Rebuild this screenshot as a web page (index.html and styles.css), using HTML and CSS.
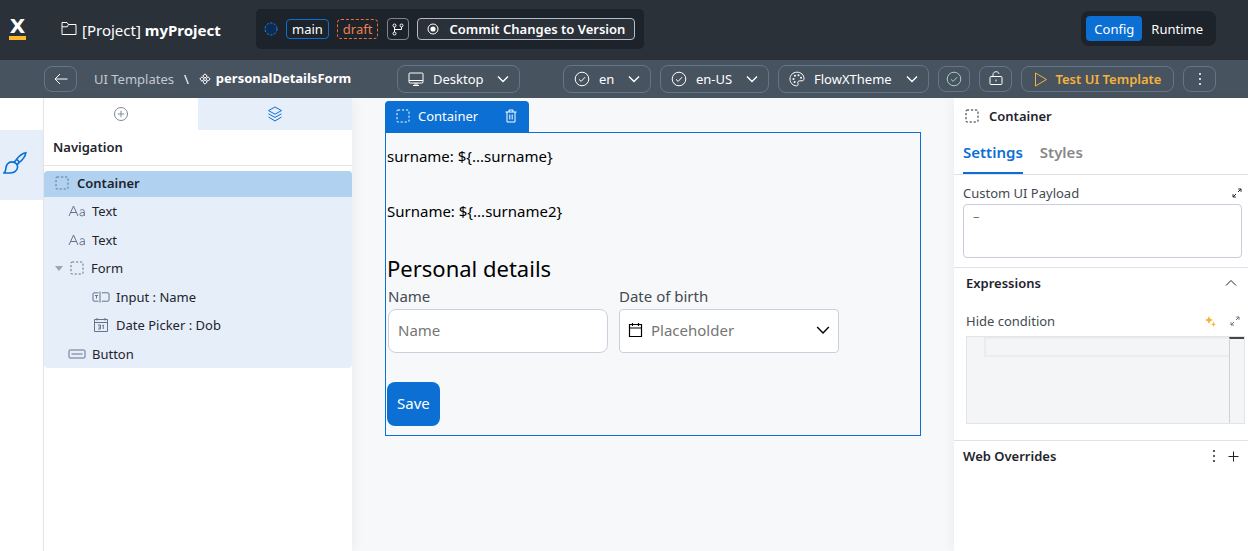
FILE: index.html
```html
<!DOCTYPE html>
<html lang="en">

<head>
    <meta charset="UTF-8">
    <meta name="viewport" content="width=device-width, initial-scale=1.0">
    <title>personalDetailsForm</title>
    <link rel="stylesheet" href="styles.css">
</head>

<body>
    <!-- shared icons -->
    <svg class="sprite" aria-hidden="true">
        <symbol id="i-dashed" viewBox="0 0 14 14">
            <rect x="1" y="1" width="12" height="12" rx="1" stroke-dasharray="2.2 1.8" />
        </symbol>
        <symbol id="i-chevron" viewBox="0 0 12 12">
            <path d="M1 3.5 6 8.5 11 3.5" />
        </symbol>
        <symbol id="i-check" viewBox="0 0 16 16">
            <circle cx="8" cy="8" r="6.8" />
            <path d="M5 8.4 7.2 10.4 11 6.2" />
        </symbol>
        <symbol id="i-expand" viewBox="0 0 10 10">
            <path d="M6 4 9 1M6.2 1H9V3.8M4 6 1 9M1 6.2V9H3.8" />
        </symbol>
        <symbol id="i-more" viewBox="0 0 4 14">
            <circle cx="2" cy="2" r="1" />
            <circle cx="2" cy="7" r="1" />
            <circle cx="2" cy="12" r="1" />
        </symbol>
        <symbol id="i-letters" viewBox="0 0 18 12">
            <path d="M1 11 5.5 1 10 11M2.8 7.5H8.2M12.2 5.4C13.5 4.2 16.3 4.2 16.3 6.5V11M16.3 7.5C13 7.4 11.8 8.2 11.8 9.3 11.8 11.4 15.5 11.4 16.3 9.2" />
        </symbol>
    </svg>

    <header class="topbar">
        <a class="logo" href="#" aria-label="Home">X</a>
        <div class="project">
            <svg class="icon" width="16" height="16" viewBox="0 0 16 16">
                <path d="M1 12.5V.5H6L7.5 2.5H15V12.5ZM1 4.8H6.3L7.5 2.5" />
            </svg>
            <span>[Project] <strong>myProject</strong></span>
        </div>
        <div class="version">
            <svg class="icon state" width="14" height="14" viewBox="0 0 14 14">
                <circle cx="7" cy="7" r="6" stroke-dasharray="2.4 1.4" />
            </svg>
            <span class="tag tag-main">main</span>
            <span class="tag tag-draft">draft</span>
            <button type="button" class="branch" aria-label="Branches">
                <svg class="icon" width="12" height="13" viewBox="0 0 12 13">
                    <circle cx="2.5" cy="2.5" r="1.5" />
                    <circle cx="2.5" cy="10.5" r="1.5" />
                    <circle cx="9.5" cy="2.5" r="1.5" />
                    <path d="M2.5 4V9M9.5 4V6.5H2.5" />
                </svg>
            </button>
            <button type="button" class="commit">
                <svg class="icon" width="12" height="12" viewBox="0 0 12 12">
                    <circle cx="6" cy="6" r="5" />
                    <circle class="solid" cx="6" cy="6" r="2.6" />
                </svg>
                Commit Changes to Version
            </button>
        </div>
        <div class="mode">
            <button type="button" class="active">Config</button>
            <button type="button">Runtime</button>
        </div>
    </header>

    <div class="toolbar">
        <button type="button" class="pill back" aria-label="Back">
            <svg class="icon" width="14" height="12" viewBox="0 0 14 12">
                <path d="M13.5 6H1M6 1 1 6 6 11" />
            </svg>
        </button>
        <nav class="crumbs">
            <a href="#">UI Templates</a>
            <span class="slash">\</span>
            <svg class="icon" width="12" height="12" viewBox="0 0 12 12">
                <path d="M6 .8 8.2 3 6 5.2 3.8 3ZM3 3.8 5.2 6 3 8.2.8 6ZM9 3.8 11.2 6 9 8.2 6.8 6ZM6 6.8 8.2 9 6 11.2 3.8 9Z" />
            </svg>
            <strong>personalDetailsForm</strong>
        </nav>
        <label class="picker picker-device">
            <svg class="icon" width="16" height="16" viewBox="0 0 16 16">
                <rect x="1" y="2" width="14" height="10" rx="1" />
                <path d="M1 9.5H15M7 12V14M9 12V14M5 14.5H11" />
            </svg>
            <select aria-label="Device">
                <option>Desktop</option>
            </select>
            <svg class="icon chevron" width="12" height="12"><use href="#i-chevron" /></svg>
        </label>
        <label class="picker picker-lang">
            <svg class="icon" width="16" height="16"><use href="#i-check" /></svg>
            <select aria-label="Language">
                <option>en</option>
            </select>
            <svg class="icon chevron" width="12" height="12"><use href="#i-chevron" /></svg>
        </label>
        <label class="picker picker-locale">
            <svg class="icon" width="16" height="16"><use href="#i-check" /></svg>
            <select aria-label="Locale">
                <option>en-US</option>
            </select>
            <svg class="icon chevron" width="12" height="12"><use href="#i-chevron" /></svg>
        </label>
        <label class="picker picker-theme">
            <svg class="icon" width="16" height="16" viewBox="0 0 16 16">
                <path d="M8 1.2C3.6 1.2 1 4.4 1 8 1 11.8 4 14.8 7.4 14.8 9 14.8 9.4 13.8 9 12.6 8.4 10.9 9.3 9.8 10.8 9.8H13C14.4 9.8 15 9 15 7.6 15 4 12 1.2 8 1.2Z" />
                <g class="solid">
                    <circle cx="4.5" cy="8" r="1" />
                    <circle cx="6" cy="4.8" r="1" />
                    <circle cx="9.5" cy="4.3" r="1" />
                    <circle cx="12" cy="6.8" r="1" />
                    <circle cx="5.6" cy="11" r="1" />
                </g>
            </svg>
            <select aria-label="Theme">
                <option>FlowXTheme</option>
            </select>
            <svg class="icon chevron" width="12" height="12"><use href="#i-chevron" /></svg>
        </label>
        <button type="button" class="pill valid" aria-label="Validate">
            <svg class="icon" width="16" height="16"><use href="#i-check" /></svg>
        </button>
        <button type="button" class="pill" aria-label="Lock">
            <svg class="icon" width="14" height="16" viewBox="0 0 14 16">
                <rect x="1" y="5.5" width="12" height="8" rx="1" />
                <path d="M4 5.5V3.6C4 0 9.5-.2 10 2.8M7 8.6V10.4" />
            </svg>
        </button>
        <button type="button" class="pill test">
            <svg class="icon" width="14" height="15" viewBox="0 0 14 15">
                <path d="M1.5 1V14L12.5 7.5Z" />
            </svg>
            Test UI Template
        </button>
        <button type="button" class="pill" aria-label="More">
            <svg class="icon dots" width="4" height="14"><use href="#i-more" /></svg>
        </button>
    </div>

    <div class="workspace">
        <aside class="rail">
            <button type="button" aria-label="Design">
                <svg class="icon" width="24" height="24" viewBox="0 0 24 24">
                    <path d="M1 22C4 20 1.6 16.5 4.4 13 7 10 11 10.4 13.2 12.6 15.6 15.4 14.6 18.6 12 20.6 9.6 22.4 4 22 1 22Z" />
                    <path d="M11.2 11.2 13.4 8.6C15.8 5.4 19 2.6 22.8 1.8 22.2 5.6 19.4 9 16 11.6L14.2 13.6" />
                    <path d="M13.4 8.6C14.8 9 15.7 10 16 11.6" />
                </svg>
            </button>
        </aside>

        <aside class="navigator">
            <div class="nav-tabs">
                <button type="button" aria-label="Add">
                    <svg class="icon" width="16" height="16" viewBox="0 0 16 16">
                        <circle cx="8" cy="8" r="6.5" />
                        <path d="M8 4.8V11.2M4.8 8H11.2" />
                    </svg>
                </button>
                <button type="button" class="active" aria-label="Layers">
                    <svg class="icon" width="16" height="16" viewBox="0 0 16 16">
                        <path d="M8 1 14.5 4.6 8 8.2 1.5 4.6ZM1.5 7.8 8 11.4 14.5 7.8M1.5 11 8 15 14.5 11" />
                    </svg>
                </button>
            </div>
            <h2>Navigation</h2>
            <div class="tree">
                <div class="node selected">
                    <svg class="icon" width="14" height="14"><use href="#i-dashed" /></svg>
                    Container
                </div>
                <ul>
                    <li class="node level-1">
                        <svg class="icon" width="18" height="12"><use href="#i-letters" /></svg>
                        Text
                    </li>
                    <li class="node level-1">
                        <svg class="icon" width="18" height="12"><use href="#i-letters" /></svg>
                        Text
                    </li>
                    <li class="node level-form">
                        <svg class="caret" width="8" height="5" viewBox="0 0 8 5"><path d="M0 0H8L4 5Z" /></svg>
                        <svg class="icon" width="14" height="14"><use href="#i-dashed" /></svg>
                        Form
                    </li>
                    <li class="node level-2">
                        <svg class="icon" width="18" height="12" viewBox="0 0 18 12">
                            <path d="M6.5 1.8H2C1.3 1.8 1 2.2 1 2.8V9.2C1 9.8 1.3 10.2 2 10.2H6.5M9.8 1.8H16C16.7 1.8 17 2.2 17 2.8V9.2C17 9.8 16.7 10.2 16 10.2H9.8M8 .5V11.5M3 4.5H6M4.5 4.5V7.5" />
                        </svg>
                        Input : Name
                    </li>
                    <li class="node level-2">
                        <svg class="icon" width="18" height="16" viewBox="0 0 18 16">
                            <path d="M2.5 2.5H15.5V14.5H2.5ZM2.5 5.5H15.5M5 1V3.5M13 1V3.5M6 8H8.5V12H6M6.5 10H8.5M10.2 8.5 11.3 8V12" />
                        </svg>
                        Date Picker : Dob
                    </li>
                    <li class="node level-1">
                        <svg class="icon" width="18" height="12" viewBox="0 0 18 12">
                            <rect x="1" y="2" width="16" height="8" rx="1" />
                            <path d="M3.5 6H14.5" />
                        </svg>
                        Button
                    </li>
                </ul>
            </div>
        </aside>

        <main class="canvas">
            <div class="selection-tab">
                <svg class="icon" width="14" height="14"><use href="#i-dashed" /></svg>
                <span>Container</span>
                <button type="button" aria-label="Delete">
                    <svg class="icon" width="12" height="14" viewBox="0 0 12 14">
                        <path d="M.5 3H11.5M4 3V1H8V3M2 3V13H10V3M4.8 5.5V10.5M7.2 5.5V10.5" />
                    </svg>
                </button>
            </div>
            <form class="selection">
                <p>surname: ${...surname}</p>
                <p>Surname: ${...surname2}</p>
                <h1>Personal details</h1>
                <div class="fields">
                    <div class="field">
                        <label for="name">Name</label>
                        <input type="text" id="name" placeholder="Name">
                    </div>
                    <div class="field">
                        <label for="dob">Date of birth</label>
                        <div class="date-box">
                            <svg class="icon" width="15" height="16" viewBox="0 0 15 16">
                                <path d="M1.5 2.5H13.5V14.5H1.5ZM1.5 6H13.5M4.5 1V4M10.5 1V4" />
                            </svg>
                            <input type="text" id="dob" placeholder="Placeholder">
                            <svg class="icon chevron" width="14" height="14"><use href="#i-chevron" /></svg>
                        </div>
                    </div>
                </div>
                <button type="button" class="save">Save</button>
            </form>
        </main>

        <aside class="inspector">
            <div class="inspector-title">
                <svg class="icon" width="14" height="14"><use href="#i-dashed" /></svg>
                Container
            </div>
            <div class="inspector-tabs">
                <button type="button" class="active">Settings</button>
                <button type="button">Styles</button>
            </div>
            <section class="payload">
                <div class="row">
                    <label for="payload">Custom UI Payload</label>
                    <svg class="icon" width="10" height="10"><use href="#i-expand" /></svg>
                </div>
                <textarea id="payload" placeholder="–"></textarea>
            </section>
            <section class="expressions">
                <div class="row">
                    <h3>Expressions</h3>
                    <svg class="icon up" width="12" height="12"><use href="#i-chevron" /></svg>
                </div>
                <div class="row condition">
                    <label for="condition">Hide condition</label>
                    <svg class="spark" width="11" height="11" viewBox="0 0 11 11">
                        <path d="M4 0 5.2 2.8 8 4 5.2 5.2 4 8 2.8 5.2 0 4 2.8 2.8ZM8.5 5.5 9.2 7.5 11 8.2 9.2 8.9 8.5 11 7.8 8.9 6 8.2 7.8 7.5Z" />
                    </svg>
                    <svg class="icon" width="10" height="10"><use href="#i-expand" /></svg>
                </div>
                <div class="editor">
                    <textarea id="condition"></textarea>
                    <div class="ruler"></div>
                </div>
            </section>
            <section class="overrides row">
                <h3>Web Overrides</h3>
                <svg class="icon dots" width="4" height="14"><use href="#i-more" /></svg>
                <svg class="icon" width="11" height="11" viewBox="0 0 11 11">
                    <path d="M5.5.5V10.5M.5 5.5H10.5" />
                </svg>
            </section>
        </aside>
    </div>
</body>

</html>
```

FILE: styles.css
```css
* {
    box-sizing: border-box;
}

body {
    margin: 0;
    min-height: 100vh;
    display: flex;
    flex-direction: column;
    font-family: "Noto Sans", "Open Sans", sans-serif;
    font-size: 13px;
    line-height: 20px;
    color: #1e242c;
    background-color: #f7f8fa;
}

button,
input,
select,
textarea {
    font: inherit;
    color: inherit;
    margin: 0;
    padding: 0;
    border: none;
    background: none;
}

button {
    cursor: pointer;
    white-space: nowrap;
}

a {
    color: inherit;
    text-decoration: none;
}

h1,
h2,
h3,
p,
ul {
    margin: 0;
    padding: 0;
}

.sprite {
    position: absolute;
    width: 0;
    height: 0;
}

.icon {
    flex: none;
    fill: none;
    stroke: currentColor;
    stroke-width: 1;
}

.icon .solid,
.dots {
    fill: currentColor;
    stroke: none;
}

/* Top bar */
.topbar {
    display: flex;
    align-items: center;
    height: 60px;
    padding-right: 32px;
    padding-left: 9px;
    background-color: #2b3139;
    color: #fff;
}

.logo {
    width: 17px;
    height: 22px;
    margin-bottom: 2px;
    border-bottom: 4px solid #ffb92e;
    font: bold 20px/16px "DejaVu Sans", sans-serif;
    text-align: center;
}

.project {
    display: flex;
    align-items: center;
    gap: 5px;
    width: 195px;
    margin-left: 35px;
    font-size: 15px;
    white-space: nowrap;
}

.version {
    display: flex;
    align-items: center;
    height: 40px;
    margin-bottom: 2px;
    padding: 0 9px 0 8px;
    border-radius: 5px;
    background-color: #1d232a;
}

.state {
    fill: #0b2d55;
    stroke: #2680e0;
}

.tag {
    height: 20px;
    margin-left: 8px;
    padding: 0 5px;
    border: 1px solid #0d6fd4;
    border-radius: 4px;
    line-height: 18px;
}

.tag-draft {
    border: 1px dashed #ef6c3a;
    color: #ef8050;
}

.branch,
.commit {
    display: flex;
    align-items: center;
    justify-content: center;
    height: 22px;
    border: 1px solid #7d8794;
    border-radius: 4px;
}

.branch {
    width: 22px;
    margin-left: 9px;
}

.commit {
    gap: 10px;
    margin-left: 8px;
    padding: 0 9px;
    border-color: #b4bcc8;
    background-color: #2b3139;
    font-weight: 600;
}

.mode {
    display: flex;
    gap: 1px;
    height: 35px;
    margin-bottom: 3px;
    margin-left: auto;
    padding: 5px;
    border-radius: 8px;
    background-color: #1d232a;
}

.mode button {
    padding: 0 8px;
    border-radius: 4px;
}

.mode .active {
    background-color: #0b6fd3;
}

/* Toolbar */
.toolbar {
    display: flex;
    align-items: center;
    gap: 9px;
    height: 38px;
    padding-right: 32px;
    padding-left: 44px;
    background-color: #485360;
    color: #fff;
}

.pill {
    display: flex;
    align-items: center;
    justify-content: center;
    flex: none;
    width: 33px;
    height: 26px;
    border: 1px solid #64748b;
    border-radius: 8px;
}

.crumbs {
    display: flex;
    align-items: center;
    flex: none;
    margin-left: 8px;
    white-space: nowrap;
}

.crumbs a {
    color: #c3c9d1;
}

.slash {
    margin: 0 10px;
}

.crumbs strong {
    margin-left: 5px;
    padding-bottom: 2px;
}

.picker {
    display: flex;
    align-items: center;
    flex: none;
    gap: 9px;
    height: 28px;
    padding: 0 10px;
    border: 1px solid #64748b;
    border-radius: 8px;
}

.picker select {
    flex: 1;
    min-width: 0;
    appearance: none;
}

.picker .chevron {
    stroke-width: 1.4;
    pointer-events: none;
}

.picker-device {
    width: 123px;
    margin-left: auto;
}

.picker-lang {
    width: 88px;
    margin-left: 34px;
}

.picker-locale {
    width: 109px;
}

.picker-theme {
    width: 151px;
}

.valid {
    width: 32px;
    color: #a5d0c4;
}

.test {
    gap: 8px;
    width: 153px;
    color: #f5b23c;
    font-weight: 600;
}

/* Workspace */
.workspace {
    display: flex;
    flex: 1;
}

.rail {
    flex: none;
    width: 44px;
    padding-top: 32px;
    border-right: 1px solid #e3e5e9;
    background-color: #fff;
}

.rail button {
    display: flex;
    align-items: center;
    width: 100%;
    height: 70px;
    padding: 0 0 5px 3px;
    background-color: #e6eefa;
    color: #0b6fd3;
}

.rail .icon {
    stroke-width: 1.6;
}

/* Navigator */
.navigator {
    flex: none;
    width: 308px;
    background-color: #fff;
    box-shadow: 4px 0 10px rgba(0, 0, 0, 0.04);
}

.nav-tabs {
    display: grid;
    grid-template-columns: 1fr 1fr;
    height: 32px;
}

.nav-tabs button {
    display: flex;
    align-items: center;
    justify-content: center;
    color: #7d8998;
}

.nav-tabs .active {
    background-color: #e6eefa;
    color: #0b6fd3;
}

.navigator h2 {
    padding: 7px 9px 8px;
    border-bottom: 1px solid #e3e5e9;
    font-size: 13px;
    font-weight: 600;
}

.tree {
    margin-top: 5px;
    border-radius: 4px;
    overflow: hidden;
    background-color: #e6eefa;
}

.tree ul {
    display: grid;
    grid-auto-rows: 1fr;
    height: 171px;
    list-style: none;
}

.node {
    display: flex;
    align-items: center;
    gap: 6px;
}

.node .icon {
    color: #64748b;
}

.selected {
    gap: 8px;
    height: 26px;
    padding-bottom: 2px;
    padding-left: 11px;
    background-color: #b0d2f0;
    font-weight: 600;
}

.level-1 {
    padding-left: 24px;
}

.level-form {
    gap: 7px;
    padding-left: 11px;
}

.level-2 {
    padding-left: 48px;
}

.caret {
    fill: #9aa5b4;
}

/* Canvas */
.canvas {
    flex: 1;
    min-width: 0;
    padding: 3px 33px 0;
}

.selection-tab {
    display: flex;
    align-items: center;
    gap: 8px;
    width: 144px;
    height: 31px;
    padding: 0 12px 2px 11px;
    border-radius: 4px 4px 0 0;
    background-color: #0b6fd3;
    color: #fff;
}

.selection-tab button {
    display: flex;
    margin-left: auto;
}

.selection {
    padding: 11px 1px 9px;
    border: 1px solid #0b6fd3;
    color: #000;
    font-size: 15px;
    line-height: 24px;
}

.selection p {
    margin-bottom: 31px;
}

.selection h1 {
    padding-bottom: 2px;
    font-size: 22px;
    font-weight: 400;
    line-height: 28px;
}

.fields {
    display: flex;
    gap: 11px;
    padding-left: 1px;
}

.field {
    width: 220px;
}

.field label {
    display: block;
    margin-bottom: 1px;
    color: #434a52;
}

.field > input,
.date-box {
    width: 100%;
    height: 44px;
    padding: 0 9px 2px;
    border: 1px solid #cdd0dc;
    border-radius: 8px;
    background-color: #fff;
}

.date-box {
    display: flex;
    align-items: center;
    gap: 8px;
    padding: 0 8px 2px;
    border-radius: 4px;
}

.date-box input {
    flex: 1;
    min-width: 0;
}

.date-box .icon {
    stroke-width: 1.2;
}

.field input::placeholder {
    color: #757575;
}

.save {
    display: block;
    height: 44px;
    margin-top: 29px;
    padding: 0 10px 2px;
    border-radius: 8px;
    background-color: #0b6fd3;
    color: #fff;
}

/* Inspector */
.inspector {
    flex: none;
    width: 294px;
    background-color: #fff;
    box-shadow: -4px 0 10px rgba(0, 0, 0, 0.04);
}

.inspector-title {
    display: flex;
    align-items: center;
    gap: 10px;
    height: 36px;
    padding-left: 11px;
    font-weight: 600;
}

.inspector-tabs {
    display: flex;
    gap: 17px;
    height: 41px;
    padding-left: 9px;
    border-bottom: 1px solid #dfe2e7;
}

.inspector-tabs button {
    padding-bottom: 3px;
    border-bottom: 2px solid transparent;
    color: #888;
    font-size: 15px;
    font-weight: 600;
}

.inspector-tabs .active {
    border-color: #0b6fd3;
    color: #0b6fd3;
}

.row {
    display: flex;
    align-items: center;
    justify-content: space-between;
}

.row label {
    color: #434a52;
}

.row h3 {
    font-size: 13px;
    font-weight: 600;
}

.payload {
    padding: 8px 6px 9px 9px;
    border-bottom: 1px solid #dfe2e7;
}

.payload textarea {
    display: block;
    width: 100%;
    height: 54px;
    margin-top: 1px;
    padding: 1px 9px;
    border: 1px solid #c9ccdb;
    border-radius: 4px;
    resize: none;
}

.expressions {
    padding: 5px 3px 16px 12px;
    border-bottom: 1px solid #dfe2e7;
}

.expressions .row {
    padding-right: 8px;
}

.up {
    transform: rotate(180deg);
}

.expressions .condition {
    gap: 14px;
    margin-top: 18px;
    padding-right: 5px;
}

.condition label {
    margin-right: auto;
}

.condition .icon {
    color: #64748b;
}

.spark {
    fill: #f9b233;
}

.editor {
    display: flex;
    height: 88px;
    margin-top: 5px;
    border: 1px solid #e1e4e8;
    background-color: #f4f5f7;
}

.editor textarea {
    flex: 1;
    min-width: 0;
    height: 20px;
    margin-left: 17px;
    border: 2px solid #ebecee;
    border-right: none;
    resize: none;
}

.ruler {
    width: 15px;
    border-top: 2px solid #42474d;
    border-left: 1px solid #cfd1d4;
}

.overrides {
    gap: 12px;
    padding: 5px 9px;
}

.overrides h3 {
    margin-right: auto;
}
```
